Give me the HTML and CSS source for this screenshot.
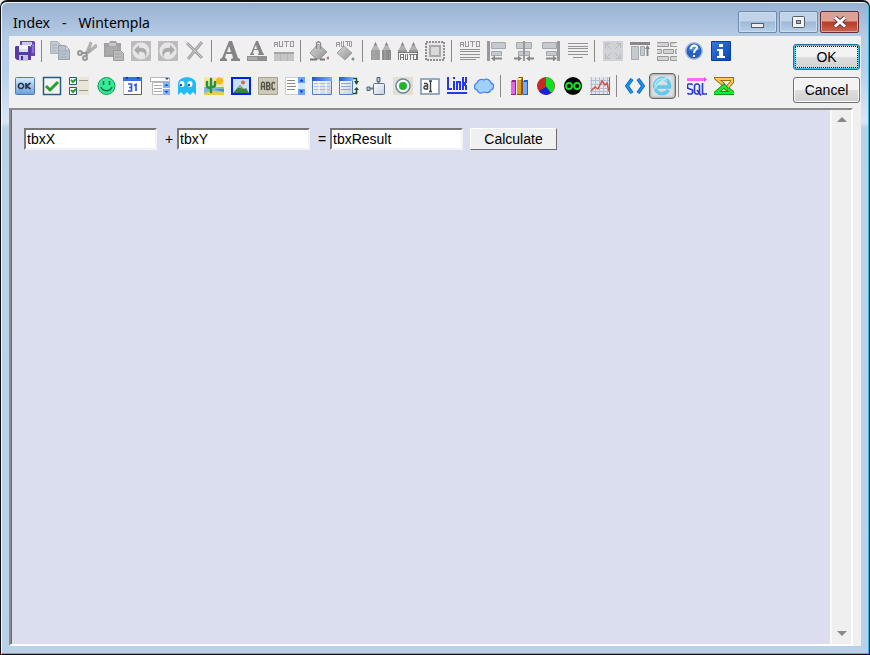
FILE: index.html
```html
<!DOCTYPE html>
<html lang="en">
<head>
<meta charset="utf-8">
<meta name="viewport" content="width=device-width, initial-scale=1">
<title>Index - Wintempla</title>
<link rel="stylesheet" href="styles.css">
</head>
<body>
<svg class="defs" aria-hidden="true">
  <defs>
    <linearGradient id="blue" x2="0" y2="1"><stop stop-color="#d8ebfb"/><stop offset="1" stop-color="#6d9dde"/></linearGradient>
    <linearGradient id="grey" x2="1" y2="1"><stop stop-color="#d8d8d8"/><stop offset="1" stop-color="#929292"/></linearGradient>
    <linearGradient id="info" x2="1" y2="1"><stop stop-color="#3478de"/><stop offset="1" stop-color="#0848ae"/></linearGradient>
    <linearGradient id="head" x2="1"><stop stop-color="#2657cc"/><stop offset="1" stop-color="#7cb0ff"/></linearGradient>
    <linearGradient id="pale" x2="1" y2="1"><stop stop-color="#ffffff"/><stop offset="1" stop-color="#c2cfe2"/></linearGradient>
  </defs>
</svg>
<div class="window">
  <header class="titlebar">
    <h1><span>Index</span><span>-</span><span>Wintempla</span></h1>
    <div class="controls">
      <button class="control" aria-label="Minimize"><svg width="20" height="20" viewBox="0 0 20 20"><rect x="3.500" y="11.500" width="12" height="4" fill="#eee" stroke="#535d69"/></svg></button>
      <button class="control" aria-label="Maximize"><svg width="20" height="20" viewBox="0 0 20 20"><rect x="3.500" y="4.500" width="12" height="11" rx="1" fill="#f4f4f4" stroke="#535d69"/><rect x="7.500" y="8.500" width="4" height="3" fill="#8fb0d2" stroke="#535d69"/></svg></button>
      <button class="control close" aria-label="Close"><svg width="20" height="20" viewBox="0 0 20 20"><path d="M5 5.500l10 9M15 5.500l-10 9" stroke="#63414b" stroke-width="5"/><path d="M5 5.500l10 9M15 5.500l-10 9" stroke="#f8f8f8" stroke-width="3"/></svg></button>
    </div>
  </header>
  <main class="client">
    <div class="top">
      <div class="toolbars">
        <div class="toolbar" role="toolbar" aria-label="Editing">
          <button class="tool" aria-label="Save"><svg viewBox="0 0 20 20"><path d="M5 0h14l1 1v14h-4V4H5z" fill="#6547b5"/><path d="M7 1h10v3H7z" fill="#c5cbea"/><path d="M1 5h14l1 1v13H2l-2-2V6z" fill="#573ba7"/><path d="M4 5h9v6H4z" fill="#f5f6ff"/><path d="M4 8h9v3H4z" fill="#d9dfee"/><path d="M4 14h9v6H4z" fill="#c5c2dd"/><path d="M6 15h2v4H6z" fill="#443088"/><path d="M17 3h2v9h-2z" fill="#8c6ed2"/></svg></button>
          <span class="sep"></span>
          <button class="tool" aria-label="Copy"><svg viewBox="0 0 20 20"><path d="M.5.500h7l3 3v9H.500z" fill="#c3c9d0" stroke="#acb2b9"/><path d="M8.500 4.500h7l4 4v10h-11z" fill="#b7c1cc" stroke="#99a2ab"/><path d="M15.500 5v4h4" fill="#dde1e5" stroke="#a6acb4"/><path d="M2 4h5M2 7h5M2 10h4M10 10h7M10 13h7M10 16h7" stroke="#a6b0bb"/></svg></button>
          <button class="tool" aria-label="Cut"><svg viewBox="0 0 20 20"><path d="M9 11l4-10 2 1-3 9zM9 12L19 3l1 3-9 7z" fill="#b3b3b3" stroke="#999" stroke-width=".6"/><g fill="none" stroke="#999" stroke-width="2"><circle cx="3" cy="12" r="2"/><circle cx="8" cy="17" r="2"/></g><path d="M4 12h5l1 3" fill="none" stroke="#919191" stroke-width="2"/></svg></button>
          <button class="tool" aria-label="Paste"><svg viewBox="0 0 20 20"><path d="M0 2h5l1-2h6l1 2h4v14H0z" fill="#a2a2a2"/><path d="M5 2h7v3H5z" fill="#c8c8c8"/><path d="M2 6h13v8H2z" fill="#ababab"/><path d="M9.500 9.500h7l3 3v7h-10z" fill="#bcbcbc" stroke="#999"/><path d="M11 13h6M11 16h7" stroke="#a5a5a5"/></svg></button>
          <button class="tool" aria-label="Undo"><svg viewBox="0 0 20 20"><rect width="20" height="20" rx="1" fill="#bcbcbc"/><circle cx="10" cy="10" r="8.500" fill="#e6e6e6"/><path d="M3 9l5-5v3c6-1 10 3 6 10 1-5-2-7-6-6v3z" fill="#aaa"/></svg></button>
          <button class="tool" aria-label="Redo"><svg viewBox="0 0 20 20"><rect width="20" height="20" rx="1" fill="#bcbcbc"/><circle cx="10" cy="10" r="8.500" fill="#e6e6e6"/><path d="M17 9l-5-5v3C6 6 2 10 6 17c-1-5 2-7 6-6v3z" fill="#aaa"/></svg></button>
          <button class="tool" aria-label="Delete"><svg viewBox="0 0 20 20"><path d="M2 2l15 15M17 1L3 18" stroke="#a0a0a0" stroke-width="3"/><path d="M2 2l15 15M17 1L3 18" stroke="#cacaca"/></svg></button>
          <span class="sep"></span>
          <button class="tool" aria-label="Font"><svg viewBox="0 0 20 20"><path d="M9 0h3l6 17 2 1v2h-9v-2l2-1-1-4H6l-1 4 2 1v2H0v-2l2-1zM9 5l-2 6h4z" fill="#858585" fill-rule="evenodd"/></svg></button>
          <button class="tool" aria-label="Font color"><svg viewBox="0 0 20 20"><path d="M9 0h2l5 12 1 1v1h-6v-1l1-1-1-3H7l-1 3 1 1v1H3v-1l1-1zM9 4L7 8h3z" fill="#858585" fill-rule="evenodd"/><path d="M0 15h20v5H0z" fill="#909090"/><path d="M1 16h9v3H1z" fill="#adadad"/></svg></button>
          <button class="tool" aria-label="Auto color"><svg viewBox="0 0 20 20" shape-rendering="crispEdges"><path d="M.5 6V1.500h3V6M.500 3.500h3M5.500 0v5.500h3V0M10 .500h5M12.500 0v6M16.500.500h3v5h-3z" fill="none" stroke="#999"/><path d="M0 11h20v9H0z" fill="#c6c6c6"/><path d="M0 11h20v2H0z" fill="#a5a5a5"/><path d="M6.500 13v7M13.500 13v7" stroke="#b6b6b6"/></svg></button>
          <span class="sep"></span>
          <button class="tool" aria-label="Fill color"><svg viewBox="0 0 20 20"><path d="M9 3l9 8-7 7H7L1 12z" fill="url(#grey)" stroke="#999"/><path d="M7.500 8V2l2-1.500 2 1.500v6" fill="none" stroke="#888" stroke-width="1.300"/><path d="M1 18.500h7M11 18.500h5" stroke="#777" stroke-width="2"/><circle cx="19" cy="17" r="1.500" fill="#b08080"/></svg></button>
          <button class="tool" aria-label="Auto fill color"><svg viewBox="0 0 20 20"><path d="M.5 6V1.500h3V6M.500 3.500h3M5.500 0v5.500h2V0M9 .500h4M11.500 0v5M13.500.500h2v5h-2z" fill="none" stroke="#999"/><path d="M8 5l8 7-7 7-8-7z" fill="url(#grey)" stroke="#a2a2a2"/><circle cx="17" cy="18" r="1.500" fill="#779480"/></svg></button>
          <span class="sep"></span>
          <button class="tool" aria-label="Pencils"><svg viewBox="0 0 20 20"><path d="M0 10l4.500-9L9 10zM11 10l4.500-9L20 10z" fill="#b6b6b6"/><path d="M4.500 1L3 4.500h3zM15.500 1L14 4.500h3z" fill="#858585"/><path d="M0 9h9v10H0z" fill="#a0a0a0"/><path d="M11 9h9v10h-9z" fill="#8e8e8e"/><path d="M3 9v10M14 9v10" stroke="#aaa"/></svg></button>
          <button class="tool" aria-label="Auto pencils"><svg viewBox="0 0 20 20"><path d="M0 10l4.500-9L9 10zM11 10l4.500-9L20 10z" fill="#b0b0b0"/><path d="M4.500 1L3 4.500h3zM15.500 1L14 4.500h3z" fill="#858585"/><path d="M0 9h9v3H0zM11 9h9v3h-9z" fill="#999"/><path d="M1 12h18v8H1z" fill="#f4f4f4"/><path d="M2.500 19v-5.500h3V19M2.500 16.500h3M7.500 13v5.500h2V13M11 13.500h4M12.500 14v5M15.500 13.500h3v5h-3zM.5 19v-7.500h19V19" fill="none" stroke="#777" shape-rendering="crispEdges"/></svg></button>
          <button class="tool" aria-label="Border"><svg viewBox="0 0 20 20" shape-rendering="crispEdges"><path d="M1 1h18v18H1z" fill="#e8e8e8" stroke="#8f8f8f" stroke-width="2" stroke-dasharray="2 1"/><path d="M5 5h10v10H5z" fill="#d9d9d9" stroke="#aaa" stroke-width="2"/></svg></button>
          <span class="sep"></span>
          <button class="tool" aria-label="Auto text"><svg viewBox="0 0 20 20" shape-rendering="crispEdges"><path d="M.5 6V1.500h3V6M.500 3.500h3M5.500 0v5.500h3V0M10 .500h5M12.500 0v6M16.500.500h3v5h-3z" fill="none" stroke="#999"/><path d="M0 8.500h20M0 10.500h20M0 13.500h20M0 16.500h20M0 18.500h16" stroke="#929292"/></svg></button>
          <button class="tool" aria-label="Align left"><svg viewBox="0 0 20 20"><path d="M1.500 0v20" stroke="#999" stroke-width="3"/><path d="M4.500 1.500h14v6h-14zM4.500 10.500h10v4h-10z" fill="#c6c9ce" stroke="#a5a8ad"/><path d="M4 17.500l4-3v2h7v2H8v2z" fill="#888"/></svg></button>
          <button class="tool" aria-label="Align center"><svg viewBox="0 0 20 20"><path d="M2.500 1.500h15v6h-15zM4.500 10.500h11v4h-11z" fill="#c6c9ce" stroke="#a5a8ad"/><path d="M10 0v20" stroke="#999" stroke-width="2"/><path d="M8 17.500l-4-3v2H0v2h4v2zM12 17.500l4-3v2h4v2h-4v2z" fill="#888"/></svg></button>
          <button class="tool" aria-label="Align right"><svg viewBox="0 0 20 20"><path d="M17.500 0v20" stroke="#999" stroke-width="3"/><path d="M1.500 1.500h14v6h-14zM5.500 10.500h10v4h-10z" fill="#c6c9ce" stroke="#a5a8ad"/><path d="M16 17.500l-4-3v2H5v2h7v2z" fill="#888"/></svg></button>
          <button class="tool" aria-label="Justify"><svg viewBox="0 0 20 20" shape-rendering="crispEdges"><path d="M0 2.500h20M0 5.500h20M0 7.500h20M0 10.500h20M0 13.500h20M5 16.500h10" stroke="#929292"/></svg></button>
          <span class="sep"></span>
          <button class="tool" aria-label="Expand"><svg viewBox="0 0 20 20"><path d="M0 0h20v20H0z" fill="#d0d2d6"/><path d="M3 3l5 5M17 3l-5 5M3 17l5-5M17 17l-5-5M2.500 7V2.500H7M13 2.500h4.500V7M17.500 13v4.500H13M7 17.500H2.500V13" fill="none" stroke="#b7babf"/></svg></button>
          <button class="tool" aria-label="Align top"><svg viewBox="0 0 20 20"><path d="M0 2.500h20" stroke="#888" stroke-width="3"/><path d="M1.500 5.500h7v13h-7zM10.500 5.500h4v9h-4z" fill="#c6c9ce" stroke="#a5a8ad"/><path d="M17.500 4l-2.500 4h1.500v7h2V8H20z" fill="#888"/></svg></button>
          <button class="tool" aria-label="Spacing"><svg viewBox="0 0 20 20"><path d="M0 1.500h11.500v4H0M13.500 5.500v-4H20M13.500 5.500H20M0 8.500h4.500v4H0M6.500 8.500h10v4h-10zM20 8.500h-1.500v4H20M.5 15.500h11v4H.500zM20 15.500h-6.500v4H20" fill="#d3d3d3" stroke="#999"/></svg></button>
          <button class="tool" aria-label="Help"><svg viewBox="0 0 20 20"><circle cx="10" cy="10" r="9" fill="#a6b9d9"/><circle cx="10" cy="10" r="7.500" fill="#2762c2"/><path d="M4.500 9a5.500 5 0 0111 0c-4-2-7 2-11 0z" fill="#5790e0"/><path d="M7 8c0-5 7-4 6-1-.5 2-3 2-3 5" fill="none" stroke="#fff" stroke-width="2"/><path d="M9 14h2v2H9z" fill="#fff"/></svg></button>
          <button class="tool" aria-label="Information"><svg viewBox="0 0 20 20"><path d="M.5.500h19v19H.500z" fill="url(#info)" stroke="#06409c"/><path d="M8 3h4v3H8zM6 8h6v7h2v2H6v-2h2v-5H6z" fill="#fff"/></svg></button>
        </div>
        <div class="toolbar" role="toolbar" aria-label="Controls">
          <button class="tool" aria-label="Button"><svg viewBox="0 0 20 20"><rect x=".5" y="1.500" width="19" height="17" rx="1" fill="url(#blue)" stroke="#5478b0"/><path d="M5 7.500h2l1.500 1.500v2L7 12.500H5L3.500 11V9zM11 7v6M15.500 7l-4 3 4 3" fill="none" stroke="#26394f" stroke-width="1.700"/></svg></button>
          <button class="tool" aria-label="Check box"><svg viewBox="0 0 20 20"><path d="M1.500 1.500h17v17h-17z" fill="#f4f4f4" stroke="#295b80" stroke-width="1.500"/><path d="M4 10l4 4 8-8" fill="none" stroke="#28a129" stroke-width="3"/></svg></button>
          <button class="tool" aria-label="Check list"><svg viewBox="0 0 20 20"><path d="M0 1h20v18H0z" fill="#e8e4d7"/><path d="M.5 1.500h7v7h-7zM.500 11.500h7v7h-7z" fill="#fff" stroke="#295b80"/><path d="M2 4l2 2 3-3M2 14l2 2 3-3" fill="none" stroke="#28a129" stroke-width="2"/><path d="M10 4.500h9M10 14.500h9" stroke="#9b998f"/></svg></button>
          <button class="tool" aria-label="Smiley"><svg viewBox="0 0 20 20"><circle cx="10.500" cy="10" r="8.500" fill="#39e99a" stroke="#119951"/><path d="M7.500 5v4M13.500 5v4M5 11c2 5 9 5 11 0" fill="none" stroke="#08733f" stroke-width="1.500"/></svg></button>
          <button class="tool" aria-label="Calendar"><svg viewBox="0 0 20 20"><path d="M.5 1.500h18v17H.500z" fill="#fff" stroke="#a9bfe8"/><path d="M0 1h19v4H0z" fill="#3471ea"/><path d="M3 1h2v2H3zM14 1h2v2h-2z" fill="#1a3a91"/><path d="M5 8h3.500v7H5M6 11.500h2M11 9.500l2-1V15" fill="none" stroke="#3159ea" stroke-width="1.700"/><path d="M1 18.500h17.500V5" fill="none" stroke="#665e54"/></svg></button>
          <button class="tool" aria-label="Combo box"><svg viewBox="0 0 20 20"><path d="M.5 1.500h19v4H.500zM2.500 6.500h12v12h-12z" fill="#fff" stroke="#b6b6b6"/><path d="M4 9.500h8M4 12.500h8M4 15.500h8" stroke="#aaa"/><path d="M13 6h7v13h-7z" fill="#82b4fb"/><path d="M13 12.500h7" stroke="#fff"/><path d="M14.500 10l2-2 2 2zM14.500 15h4l-2 2zM15 2h4l-2 2z" fill="#1645b9"/></svg></button>
          <button class="tool" aria-label="Ghost"><svg viewBox="0 0 20 20"><path d="M1 19V8c0-9 18-9 18 0v11l-3-3-3 3-3-3-3 3-3-3z" fill="#20bcf6"/><ellipse cx="5" cy="8" rx="2.500" ry="3" fill="#fff"/><ellipse cx="13" cy="8" rx="2.500" ry="3" fill="#fff"/><path d="M3 8h2v2H3zM11 8h2v2h-2z" fill="#1649a0"/></svg></button>
          <button class="tool" aria-label="Cactus"><svg viewBox="0 0 20 20"><path d="M0 1h20v18H0z" fill="#7fb9dc"/><path d="M0 1h20v10H0z" fill="#f6e8a3"/><circle cx="15.500" cy="5" r="3.500" fill="#f2ba1d"/><path d="M0 17l8-2 12 1v3H0z" fill="#eccc4c"/><path d="M7 3v13M3 6v4q0 2 4 2M11 6v3q0 2-4 2" fill="none" stroke="#26933f" stroke-width="2.500" stroke-linecap="round"/><path d="M10 13h10v3z" fill="#3d91cc"/></svg></button>
          <button class="tool" aria-label="Picture"><svg viewBox="0 0 20 20"><path d="M1 2h18v16H1z" fill="#c9e2f8" stroke="#0022ed" stroke-width="2"/><circle cx="12" cy="6.500" r="2" fill="#d76b46"/><path d="M2 17l7-8 4 4 2-1 3 5z" fill="#3b8144"/><path d="M6 12l3-3 4 4-4-1z" fill="#9caa8b"/></svg></button>
          <button class="tool" aria-label="Label"><svg viewBox="0 0 20 20"><path d="M.5 1.500h19v17H.500z" fill="#cfcab8" stroke="#a5a192"/><path d="M3.500 14V7l1.500-1 1.500 1v7M3.500 10.500h3M8.700 6.500h2l1 1v2l-1 .500 1 1v2l-1 .500h-2zM9 10h2M17 7.500l-1-1h-1l-1 1v5l1 1h1l1-1" fill="none" stroke="#555247" stroke-width="1.400"/></svg></button>
          <button class="tool" aria-label="List box"><svg viewBox="0 0 20 20"><path d="M.5 1.500h18v17H.500z" fill="#fff" stroke="#ccc"/><path d="M2 4.500h8M2 7.500h8M2 10.500h9M2 13.500h8" stroke="#888"/><path d="M13 1h7v18h-7z" fill="#6da4fb"/><path d="M13 7h7v6h-7z" fill="#d3e6ff"/><path d="M14.500 5.500l2-2.500 2 2.500zM14.500 14.500h4l-2 2.500z" fill="#0f38b2"/></svg></button>
          <button class="tool" aria-label="Table"><svg viewBox="0 0 20 20"><path d="M.5 1.500h19v17H.500z" fill="url(#pale)" stroke="#547ebf"/><path d="M0 1h20v4H0z" fill="url(#head)"/><path d="M2 7.500h16M2 10.500h16M2 13.500h16" stroke="#adbdd4"/><path d="M7 5v13M14 5v13" stroke="#fff"/></svg></button>
          <button class="tool" aria-label="Dynamic table"><svg viewBox="0 0 20 20"><path d="M.5 1.500h13v17H.500z" fill="url(#pale)" stroke="#547ebf"/><path d="M0 1h14v4H0z" fill="url(#head)"/><path d="M2 7.500h10M2 10.500h10M2 13.500h10" stroke="#96a8c1"/><path d="M14 2.500h3.500V6M14 17.500h3.500V13" fill="none" stroke="#18532e" stroke-width="1.500"/><path d="M15 5h5l-2.500 4zM15 14h5l-2.500-3z" fill="#18532e"/></svg></button>
          <button class="tool" aria-label="Plug"><svg viewBox="0 0 20 20"><path d="M12.500 5v4M4 12.500h4" stroke="#688196" stroke-width="2"/><path d="M11 1.500h3v4h-3zM1 11h3v3.500H1z" fill="#b5c2cf" stroke="#506579"/><rect x="7.500" y="7.500" width="11" height="11" rx="1" fill="url(#pale)" stroke="#587086"/></svg></button>
          <button class="tool" aria-label="Radio button"><svg viewBox="0 0 20 20"><path d="M0 1h20v18H0z" fill="#e2dfd2"/><circle cx="10" cy="10" r="7" fill="#fff" stroke="#658aa0" stroke-width="1.500"/><circle cx="10" cy="10" r="4" fill="#22b32d"/></svg></button>
          <button class="tool" aria-label="Text box"><svg viewBox="0 0 20 20"><path d="M1 3h18v15H1z" fill="#fff" stroke="#7590ae" stroke-width="1.500"/><path d="M4 7.500h2.500l1 1V13H5l-1-1v-1l1-1h2.500M9 5h3M10.500 5v10M9 15.500h3" fill="none" stroke="#38404c" stroke-width="1.400"/></svg></button>
          <button class="tool" aria-label="Link"><svg viewBox="0 0 20 20" shape-rendering="crispEdges"><path d="M1 1v12h4M7 5v9M7 1v2M10 14V6h3v8M16 1v13M19 1v5l-2 2 2 2v4" fill="none" stroke="#2738e8" stroke-width="2"/><path d="M0 17h20" stroke="#2738e8" stroke-width="2"/></svg></button>
          <button class="tool" aria-label="Cloud"><svg viewBox="0 0 20 20"><path d="M3 14c-4-1-3-6 0-7 1-4 5-4 7-3 3-2 6 0 7 3 4 1 3 6 0 7-1 3-5 3-7 2-3 2-6 1-7-2z" fill="#9fd0ff" stroke="#4c83ee" stroke-width="1.300"/></svg></button>
          <span class="sep"></span>
          <button class="tool" aria-label="Bar chart"><svg viewBox="0 0 20 20"><path d="M2 19V6l1-2h4v15z" fill="#8f2593"/><path d="M2 6h4v12H2z" fill="#e765e2"/><path d="M8 19V3l2-2h4v17l-1 1z" fill="#87520d"/><path d="M8 3h4v15H8z" fill="#dc9c27"/><path d="M9 2h4l-1 2H8z" fill="#fff184"/><path d="M14 19V6l1-2h4v15z" fill="#1d5ed0"/><path d="M14 6h4v12h-4z" fill="#70adff"/></svg></button>
          <button class="tool" aria-label="Pie chart"><svg viewBox="0 0 20 20"><circle cx="10" cy="10" r="9" fill="#c52922"/><path d="M10 1a9 9 0 015 16l-5-7z" fill="#09e525"/><path d="M10 11l5 6c-4 3-9 2-12-2z" fill="#1222e3"/></svg></button>
          <button class="tool" aria-label="Infinity"><svg viewBox="0 0 20 20"><circle cx="10" cy="10" r="9" fill="#050505"/><g fill="none" stroke="#14e525" stroke-width="1.800"><circle cx="6" cy="10" r="3"/><circle cx="14" cy="10" r="3"/></g></svg></button>
          <button class="tool" aria-label="Line chart"><svg viewBox="0 0 20 20"><path d="M0 1h20v18H0z" fill="#e2e7ef"/><path d="M1.500 1v18M5.500 1v18M9.500 1v18M13.500 1v18M17.500 1v18M0 4.500h20M0 8.500h20M0 12.500h20M0 15.500h20" stroke="#b5c0cf"/><path d="M1 15l4-4 3 2 4-8 3 4 2-2 2 8" fill="none" stroke="#d45443" stroke-width="1.500"/><path d="M0 18.500h19.500V1" fill="none" stroke="#62718c"/></svg></button>
          <span class="sep"></span>
          <button class="tool" aria-label="Source code"><svg viewBox="0 0 20 20"><path d="M7 3L2 10l5 7M13 3l5 7-5 7" fill="none" stroke="#0757b8" stroke-width="3.500"/><path d="M7 3L2 10l5 7M13 3l5 7-5 7" fill="none" stroke="#1795f4" stroke-width="2"/></svg></button>
          <button class="tool selected" aria-label="Browser" aria-pressed="true"><svg viewBox="0 0 20 20"><path d="M16.500 14a7.500 7.500 0 111-5v2H5" fill="none" stroke="#62c8ee" stroke-width="3.500"/><path d="M15 5a7 7 0 00-12 5" fill="none" stroke="#a8e6fc" stroke-width="1.500"/><path d="M2 19C-2 14 11 1 19 1" fill="none" stroke="#b8ebfc" stroke-width="1.300"/></svg></button>
          <span class="sep"></span>
          <button class="tool" aria-label="SQL"><svg viewBox="0 0 20 20"><path d="M0 3.500h18" stroke="#f56cf5" stroke-width="3"/><path d="M17 1l3 2.500L17 6z" fill="#e849e8"/><path d="M5.500 9L4.500 8h-3l-1 1v3l5 2v3l-1 1h-3l-1-1M9 8h2l1.500 1.500v7L11 18H9l-1.500-1.500v-7zM10 14l4 5.500M15.500 7v11H20" fill="none" stroke="#2b36d0" stroke-width="1.600"/></svg></button>
          <button class="tool" aria-label="Sigma"><svg viewBox="0 0 20 20"><path d="M10 9l-7-6h15v3l-7 8" fill="none" stroke="#a66b10" stroke-width="4"/><path d="M10 9l-7-6h15v3l-7 8" fill="none" stroke="#f5cd55" stroke-width="2"/><path d="M13 13l-3-3-8 7h17l-5-4" fill="none" stroke="#077d18" stroke-width="4"/><path d="M13 13l-3-3-8 7h17l-5-4" fill="none" stroke="#15f02b" stroke-width="2.500"/></svg></button>
        </div>
      </div>
      <div class="actions">
        <button class="action primary"><span>OK</span></button>
        <button class="action"><span>Cancel</span></button>
      </div>
    </div>
    <section class="panel" aria-label="Page design">
      <form class="form" onsubmit="return false">
        <input class="field" type="text" value="tbxX" aria-label="X">
        <span class="sign">+</span>
        <input class="field" type="text" value="tbxY" aria-label="Y">
        <span class="sign">=</span>
        <input class="field" type="text" value="tbxResult" aria-label="Result">
        <button class="calculate">Calculate</button>
      </form>
      <div class="scrollbar">
        <button class="scroll" aria-label="Scroll up"><svg width="10" height="6" viewBox="0 0 10 6"><path d="M0 5l5-5 5 5z" fill="#888"/></svg></button>
        <button class="scroll" aria-label="Scroll down"><svg width="10" height="6" viewBox="0 0 10 6"><path d="M0 0h10L5 5z" fill="#888"/></svg></button>
      </div>
    </section>
  </main>
</div>
</body>
</html>
```

FILE: styles.css
```css
* { box-sizing: border-box; }
body { margin: 0; background: #ececec; color: #000; font: 14px/16px "Liberation Sans", Arial, sans-serif; }
button { margin: 0; padding: 0; border: 0; font: inherit; color: inherit; }
svg { display: block; }
.defs { position: absolute; width: 0; height: 0; }

.window {
  display: flex;
  flex-direction: column;
  min-height: 100vh;
  padding: 0 8px 8px 7px;
  border: 1px solid #111;
  border-top-width: 2px;
  border-radius: 7px 7px 0 0;
  background: linear-gradient(#98b1d1 0, #b4cbe5 34px, #b8d1ea 70px, #dbe5f6 120px, #b9d3e6 126px, #b9d1e8 100%);
  box-shadow: inset 1px 1px #edf6ff, inset -1px -1px #20c4ed;
}
.titlebar { display: flex; justify-content: space-between; height: 34px; padding: 9px 2px 0 5px; }
h1 { display: flex; gap: 12px; margin: 0; font: 14px/24px "Noto Sans", "Open Sans", sans-serif; }
.controls { display: flex; gap: 2px; }
.control {
  display: grid;
  place-items: center;
  width: 39px;
  height: 22px;
  border: 1px solid #6e88aa;
  border-radius: 2px;
  background: linear-gradient(#c0d3e8 0 45%, #9db9d8 50%, #b9d1e9);
  box-shadow: inset 0 0 0 1px #cbdcee;
}
.control.close { border-color: #662e34; background: linear-gradient(#dca095 0 45%, #b83b25 50%, #c9634e); box-shadow: inset 0 0 0 1px #dba49c; }

.client { display: flex; flex: 1; flex-direction: column; margin: 0 0 0 1px; padding-right: 8px; background: #f0f0f0; }
.top { display: flex; justify-content: space-between; margin-right: -8px; padding: 0 1px 0 3px; }
.toolbars { padding-top: 2px; }
.toolbar { display: flex; height: 26px; margin-bottom: 9px; }
.tool { width: 27px; height: 26px; padding: 3px 4px 3px 3px; background: none; }
.tool svg { width: 20px; height: 20px; }
.tool.selected { padding: 2px 3px 2px 2px; border: 1px solid #666; border-radius: 4px; background: #dedede; box-shadow: inset 0 0 2px 1px #aaa; }
.sep { width: 8px; height: 22px; border-left: 1px solid #898989; margin: 2px -2px 0 2px; }
.actions { display: flex; flex-direction: column; gap: 7px; padding-top: 8px; }
.action {
  width: 67px;
  height: 26px;
  padding: 1px;
  border: 1px solid #707070;
  border-radius: 3px;
  background: linear-gradient(#f3f3f3 0 48%, #dedede 50%, #d0d0d0);
  box-shadow: inset 0 0 0 1px #fafafa;
}
.action span { display: block; line-height: 22px; }
.primary { border-color: #2c6e8d; box-shadow: inset 0 0 0 1px #35c4f1; }
.primary span { border: 1px dotted #111; line-height: 20px; }

.panel {
  display: flex;
  flex: 1;
  justify-content: space-between;
  border: 2px solid;
  border-color: #8b8b8b #fff #fff #8b8b8b;
  background: #dbdeef;
  box-shadow: inset 1px 0 #696969;
}
.form { display: flex; align-items: flex-start; padding: 18px 0 0 13px; }
.field {
  width: 133px;
  height: 22px;
  padding: 0 1px;
  border: 2px solid;
  border-color: #777 #f3f3f3 #f3f3f3 #777;
  border-radius: 0;
  background: #fff;
  color: #000;
  font: inherit;
}
.sign { width: 20px; padding-left: 8px; line-height: 22px; }
.calculate { width: 87px; height: 22px; margin-left: 7px; border: 1px solid; border-color: #fff #696969 #696969 #fff; background: #f0f0f0; line-height: 18px; }
.scrollbar { display: flex; flex-direction: column; justify-content: space-between; width: 21px; border-left: 2px solid #f9f9f9; background: #efefef; }
.scroll { display: grid; place-items: center; height: 20px; background: none; }
```
